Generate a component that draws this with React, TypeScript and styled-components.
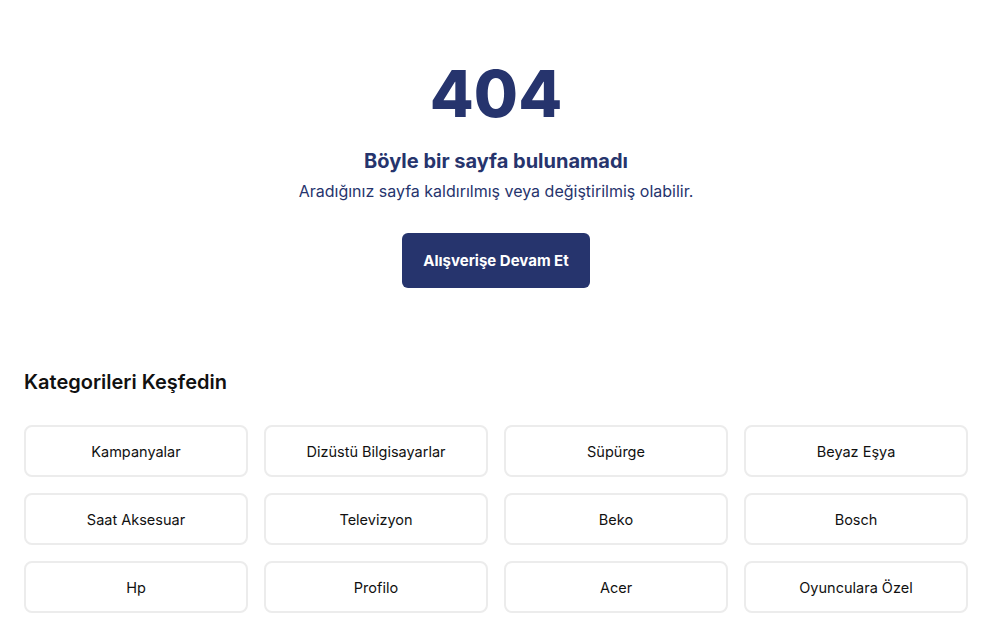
import React from 'react';
import styled, { createGlobalStyle } from 'styled-components';

const categories = [
  'Kampanyalar',
  'Dizüstü Bilgisayarlar',
  'Süpürge',
  'Beyaz Eşya',
  'Saat Aksesuar',
  'Televizyon',
  'Beko',
  'Bosch',
  'Hp',
  'Profilo',
  'Acer',
  'Oyunculara Özel',
];

const GlobalStyle = createGlobalStyle`
  body {
    margin: 0;
    background: #fff;
    font-family: Inter, "Noto Sans", sans-serif;
    color: #111;
  }
`;

const Page = styled.div`
  width: 944px;
  margin-left: 24px;
`;

const NotFound = styled.section`
  display: flex;
  flex-direction: column;
  align-items: center;
  padding-top: 62px;
  color: #26346d;
`;

const Code = styled.h1`
  margin: 0;
  font-size: 64px;
  line-height: 1;
  font-weight: 800;
`;

const Title = styled.h2`
  margin: 21px 0 0;
  font-size: 20px;
  line-height: 28px;
  font-weight: 700;
`;

const Subtitle = styled.p`
  margin: 4px 0 0;
  font-size: 16px;
  line-height: 24px;
  font-weight: 400;
`;

const ShopButton = styled.button`
  margin-top: 30px;
  height: 55px;
  padding: 0 21px;
  border: 0;
  border-radius: 6px;
  background: #26346d;
  color: #fff;
  font-family: inherit;
  font-size: 15px;
  font-weight: 700;
  cursor: pointer;
`;

const Categories = styled.section`
  margin-top: 80px;
`;

const Heading = styled.h3`
  margin: 0 0 29px;
  font-size: 20px;
  line-height: 28px;
  font-weight: 600;
  color: #111;
`;

const Grid = styled.div`
  display: grid;
  grid-template-columns: repeat(4, 1fr);
  gap: 16px;
`;

const CategoryCard = styled.a`
  display: flex;
  align-items: center;
  justify-content: center;
  height: 52px;
  box-sizing: border-box;
  border: 2px solid #ececec;
  border-radius: 8px;
  font-size: 14.5px;
  color: #111;
  text-decoration: none;
`;

export default function App() {
  return (
    <>
      <GlobalStyle />
      <Page>
        <NotFound>
          <Code>404</Code>
          <Title>Böyle bir sayfa bulunamadı</Title>
          <Subtitle>Aradığınız sayfa kaldırılmış veya değiştirilmiş olabilir.</Subtitle>
          <ShopButton>Alışverişe Devam Et</ShopButton>
        </NotFound>
        <Categories>
          <Heading>Kategorileri Keşfedin</Heading>
          <Grid>
            {categories.map((c) => (
              <CategoryCard key={c} href="#">
                {c}
              </CategoryCard>
            ))}
          </Grid>
        </Categories>
      </Page>
    </>
  );
}
